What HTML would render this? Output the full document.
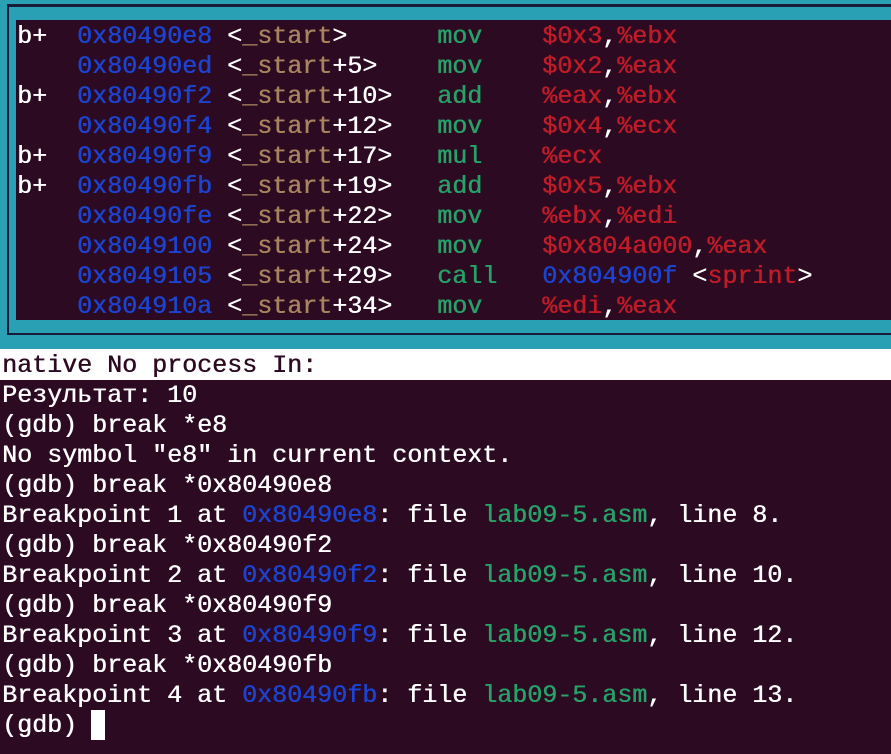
<!DOCTYPE html>
<html><head><meta charset="utf-8"><style>
html,body{margin:0;padding:0;width:891px;height:754px;overflow:hidden;background:#2c0a22;}
body{position:relative;font-family:"Liberation Mono","DejaVu Sans Mono",monospace;font-size:25px;color:#fff;}
.l{position:absolute;white-space:pre;height:30px;line-height:30px;text-shadow:0.5px 0 0 currentColor;}
.b{color:#1c44d0}.t{color:#a8845e}.g{color:#26a269}.r{color:#c01c28}
.teal{position:absolute;background:#2aa0b4}
.dk{position:absolute;background:#1a1a3a}
</style></head><body>
<div class="teal" style="left:0;top:0;width:891px;height:349px"></div>
<div class="dk" style="left:7px;top:4px;width:884px;height:3px"></div>
<div class="dk" style="left:7px;top:4px;width:2px;height:331px"></div>
<div class="dk" style="left:7px;top:333px;width:884px;height:2px"></div>
<div style="position:absolute;left:16px;top:20px;width:875px;height:300px;background:#2c0a22"></div>
<div class="l" style="left:17px;top:22px">b+  <span class="b">0x80490e8</span> &lt;<span class="t">_start</span>&gt;      <span class="g">mov</span>    <span class="r">$0x3</span>,<span class="r">%ebx</span></div>
<div class="l" style="left:17px;top:52px">    <span class="b">0x80490ed</span> &lt;<span class="t">_start</span>+5&gt;    <span class="g">mov</span>    <span class="r">$0x2</span>,<span class="r">%eax</span></div>
<div class="l" style="left:17px;top:82px">b+  <span class="b">0x80490f2</span> &lt;<span class="t">_start</span>+10&gt;   <span class="g">add</span>    <span class="r">%eax</span>,<span class="r">%ebx</span></div>
<div class="l" style="left:17px;top:112px">    <span class="b">0x80490f4</span> &lt;<span class="t">_start</span>+12&gt;   <span class="g">mov</span>    <span class="r">$0x4</span>,<span class="r">%ecx</span></div>
<div class="l" style="left:17px;top:142px">b+  <span class="b">0x80490f9</span> &lt;<span class="t">_start</span>+17&gt;   <span class="g">mul</span>    <span class="r">%ecx</span></div>
<div class="l" style="left:17px;top:172px">b+  <span class="b">0x80490fb</span> &lt;<span class="t">_start</span>+19&gt;   <span class="g">add</span>    <span class="r">$0x5</span>,<span class="r">%ebx</span></div>
<div class="l" style="left:17px;top:202px">    <span class="b">0x80490fe</span> &lt;<span class="t">_start</span>+22&gt;   <span class="g">mov</span>    <span class="r">%ebx</span>,<span class="r">%edi</span></div>
<div class="l" style="left:17px;top:232px">    <span class="b">0x8049100</span> &lt;<span class="t">_start</span>+24&gt;   <span class="g">mov</span>    <span class="r">$0x804a000</span>,<span class="r">%eax</span></div>
<div class="l" style="left:17px;top:262px">    <span class="b">0x8049105</span> &lt;<span class="t">_start</span>+29&gt;   <span class="g">call</span>   <span class="b">0x804900f</span> &lt;<span class="r">sprint</span>&gt;</div>
<div class="l" style="left:17px;top:292px">    <span class="b">0x804910a</span> &lt;<span class="t">_start</span>+34&gt;   <span class="g">mov</span>    <span class="r">%edi</span>,<span class="r">%eax</span></div>
<div style="position:absolute;left:0;top:349px;width:891px;height:31px;background:#fff"></div>
<div class="l" style="left:2px;top:351px;color:#2c0a22">native No process In:</div>
<div class="l" style="left:2px;top:381px">Результат: 10</div>
<div class="l" style="left:2px;top:411px">(gdb) break *e8</div>
<div class="l" style="left:2px;top:441px">No symbol "e8" in current context.</div>
<div class="l" style="left:2px;top:471px">(gdb) break *0x80490e8</div>
<div class="l" style="left:2px;top:501px">Breakpoint 1 at <span class="b">0x80490e8</span>: file <span class="g">lab09-5.asm</span>, line 8.</div>
<div class="l" style="left:2px;top:531px">(gdb) break *0x80490f2</div>
<div class="l" style="left:2px;top:561px">Breakpoint 2 at <span class="b">0x80490f2</span>: file <span class="g">lab09-5.asm</span>, line 10.</div>
<div class="l" style="left:2px;top:591px">(gdb) break *0x80490f9</div>
<div class="l" style="left:2px;top:621px">Breakpoint 3 at <span class="b">0x80490f9</span>: file <span class="g">lab09-5.asm</span>, line 12.</div>
<div class="l" style="left:2px;top:651px">(gdb) break *0x80490fb</div>
<div class="l" style="left:2px;top:681px">Breakpoint 4 at <span class="b">0x80490fb</span>: file <span class="g">lab09-5.asm</span>, line 13.</div>
<div class="l" style="left:2px;top:711px">(gdb) </div>
<div style="position:absolute;left:91px;top:710px;width:14px;height:30px;background:#fff"></div>
</body></html>
